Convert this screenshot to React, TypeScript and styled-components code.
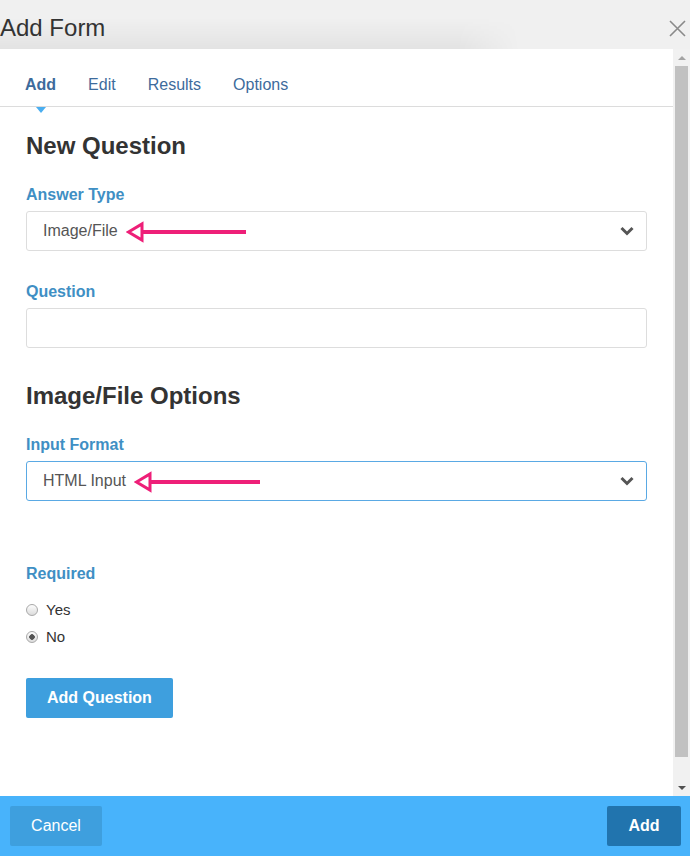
import styled, { createGlobalStyle } from 'styled-components'

const GlobalStyle = createGlobalStyle`
    html, body {
        margin: 0;
        padding: 0;
        background: #f0f0f0;
        font-family: "Liberation Sans", Arial, sans-serif;
    }
`

function PinkArrow({ width }: { width: number }) {
    return (
        <Arrow width={width} height={22} viewBox={`0 0 ${width} 22`}>
            <polygon points="2.5,11 16,3 16,19" fill="#fff" stroke="#ee1f78" strokeWidth="3" strokeLinejoin="miter" />
            <rect x="16" y="9" width={width - 16} height="4" fill="#ee1f78" />
        </Arrow>
    )
}

function Chevron() {
    return (
        <ChevronIcon width="14" height="10" viewBox="0 0 14 10">
            <polyline points="1.5,2 7,7.5 12.5,2" fill="none" stroke="#555" strokeWidth="3" />
        </ChevronIcon>
    )
}

export default function App() {
    return (
        <Page>
            <GlobalStyle />
            <Header>
                <Title>Add Form</Title>
                <Close width="17" height="17" viewBox="0 0 17 17">
                    <path d="M1 1 L16 16 M16 1 L1 16" stroke="#8a8a8a" strokeWidth="1.6" />
                </Close>
            </Header>
            <Body>
                <Content>
                    <Tabs>
                        <Tab active>Add</Tab>
                        <Tab>Edit</Tab>
                        <Tab>Results</Tab>
                        <Tab>Options</Tab>
                    </Tabs>
                    <Form>
                        <Heading>New Question</Heading>
                        <Label>Answer Type</Label>
                        <Select>
                            <SelectText>Image/File</SelectText>
                            <PinkArrow width={120} />
                            <Chevron />
                        </Select>

                        <Label gap={32}>Question</Label>
                        <Input />

                        <Heading gap={35}>Image/File Options</Heading>
                        <Label>Input Format</Label>
                        <Select focused>
                            <SelectText>HTML Input</SelectText>
                            <PinkArrow width={126} />
                            <Chevron />
                        </Select>

                        <Label gap={64}>Required</Label>
                        <Radios>
                            <RadioRow>
                                <Radio />
                                Yes
                            </RadioRow>
                            <RadioRow>
                                <Radio checked />
                                No
                            </RadioRow>
                        </Radios>
                        <AddQuestion>Add Question</AddQuestion>
                    </Form>
                </Content>
                <ScrollBar>
                    <ScrollArrow />
                    <Thumb />
                    <ScrollArrow down />
                </ScrollBar>
            </Body>
            <Footer>
                <FooterButton>Cancel</FooterButton>
                <FooterButton primary>Add</FooterButton>
            </Footer>
        </Page>
    )
}

const Page = styled.div`
    display: flex;
    flex-direction: column;
    width: 690px;
    height: 856px;
    overflow: hidden;
`

const Header = styled.div`
    position: relative;
    height: 49px;
    display: flex;
    align-items: flex-start;
    justify-content: space-between;
    background-color: #f0f0f0;

    /* soft blurred band behind the title */
    &::before {
        content: '';
        position: absolute;
        left: 0;
        top: 18px;
        width: 520px;
        height: 31px;
        background: linear-gradient(to bottom, rgba(0, 0, 0, 0), rgba(0, 0, 0, 0.05));
        -webkit-mask-image: linear-gradient(to right, #000 88%, transparent);
        mask-image: linear-gradient(to right, #000 88%, transparent);
    }
`

const Title = styled.div`
    position: relative;
    font-size: 24px;
    line-height: 28px;
    margin-top: 14px;
    color: #333;
`

const Close = styled.svg`
    margin: 20px 4px 0 0;
`

const Body = styled.div`
    flex: 1;
    display: flex;
    background: #fff;
    min-height: 0;
`

const Content = styled.div`
    flex: 1;
    display: flex;
    flex-direction: column;
`

const Tabs = styled.div`
    display: flex;
    gap: 32px;
    height: 58px;
    align-items: flex-end;
    padding: 0 0 11px 25px;
    border-bottom: 1px solid #dcdcdc;
    box-sizing: border-box;
`

const Tab = styled.div<{ active?: boolean }>`
    position: relative;
    font-size: 16px;
    line-height: 20px;
    color: #3d6b9c;
    font-weight: ${p => (p.active ? 'bold' : 'normal')};

    &::after {
        content: '';
        display: ${p => (p.active ? 'block' : 'none')};
        position: absolute;
        left: 11px;
        top: 32px;
        border-left: 5px solid transparent;
        border-right: 5px solid transparent;
        border-top: 6px solid #4aaef0;
    }
`

const Form = styled.div`
    padding: 26px 26px 0;
    display: flex;
    flex-direction: column;
`

const Heading = styled.h2<{ gap?: number }>`
    margin: ${p => p.gap ?? 0}px 0 0;
    font-size: 24px;
    line-height: 26px;
    font-weight: bold;
    color: #333;
`

const Label = styled.div<{ gap?: number }>`
    margin-top: ${p => p.gap ?? 27}px;
    font-size: 16px;
    line-height: 18px;
    font-weight: bold;
    color: #3f8fc4;
`

const Select = styled.div<{ focused?: boolean }>`
    margin-top: 7px;
    height: 40px;
    box-sizing: border-box;
    display: flex;
    align-items: center;
    padding: 0 12px 0 16px;
    border: 1px solid ${p => (p.focused ? '#5aa9e4' : '#dddddd')};
    border-radius: 3px;
    background: #fff;
`

const SelectText = styled.span`
    font-size: 16px;
    color: #555;
`

const Arrow = styled.svg`
    margin-left: 8px;
    margin-top: 1px;
`

const ChevronIcon = styled.svg`
    margin-left: auto;
`

const Input = styled.div`
    margin-top: 7px;
    height: 40px;
    box-sizing: border-box;
    border: 1px solid #dddddd;
    border-radius: 3px;
`

const Radios = styled.div`
    margin-top: 13px;
    display: flex;
    flex-direction: column;
`

const RadioRow = styled.label`
    display: flex;
    align-items: center;
    gap: 8px;
    height: 27px;
    font-size: 15px;
    color: #333;
`

const Radio = styled.span<{ checked?: boolean }>`
    width: 12px;
    height: 12px;
    box-sizing: border-box;
    border-radius: 50%;
    border: 1px solid #a9a9a9;
    background: radial-gradient(circle, ${p => (p.checked ? '#555 0 2.5px, transparent 3px' : 'transparent 0')}),
        linear-gradient(#fdfdfd, #dcdcdc);
`

const AddQuestion = styled.button`
    margin-top: 28px;
    align-self: flex-start;
    height: 40px;
    padding: 0 21px;
    border: none;
    border-radius: 2px;
    background: #3e9fde;
    color: #fff;
    font-family: inherit;
    font-size: 16px;
    font-weight: bold;
`

const ScrollBar = styled.div`
    width: 17px;
    background: #f1f1f1;
    display: flex;
    flex-direction: column;
    align-items: center;
`

const ScrollArrow = styled.div<{ down?: boolean }>`
    height: 17px;
    width: 17px;
    display: flex;
    align-items: center;
    justify-content: center;

    &::before {
        content: '';
        border-left: 4px solid transparent;
        border-right: 4px solid transparent;
        ${p => (p.down ? 'border-top: 4px solid #505050;' : 'border-bottom: 4px solid #a3a3a3;')}
    }
`

const Thumb = styled.div`
    flex: 1;
    width: 13px;
    margin-bottom: 22px;
    background: #c1c1c1;
`

const Footer = styled.div`
    height: 60px;
    box-sizing: border-box;
    padding: 10px 9px 10px 10px;
    display: flex;
    justify-content: space-between;
    background: #48b3fb;
`

const FooterButton = styled.button<{ primary?: boolean }>`
    height: 40px;
    padding: 0 21px;
    min-width: ${p => (p.primary ? 74 : 92)}px;
    border: none;
    border-radius: 2px;
    background: ${p => (p.primary ? '#2174ae' : '#3e9fde')};
    color: #fff;
    font-family: inherit;
    font-size: 16px;
    font-weight: ${p => (p.primary ? 'bold' : 'normal')};
`
